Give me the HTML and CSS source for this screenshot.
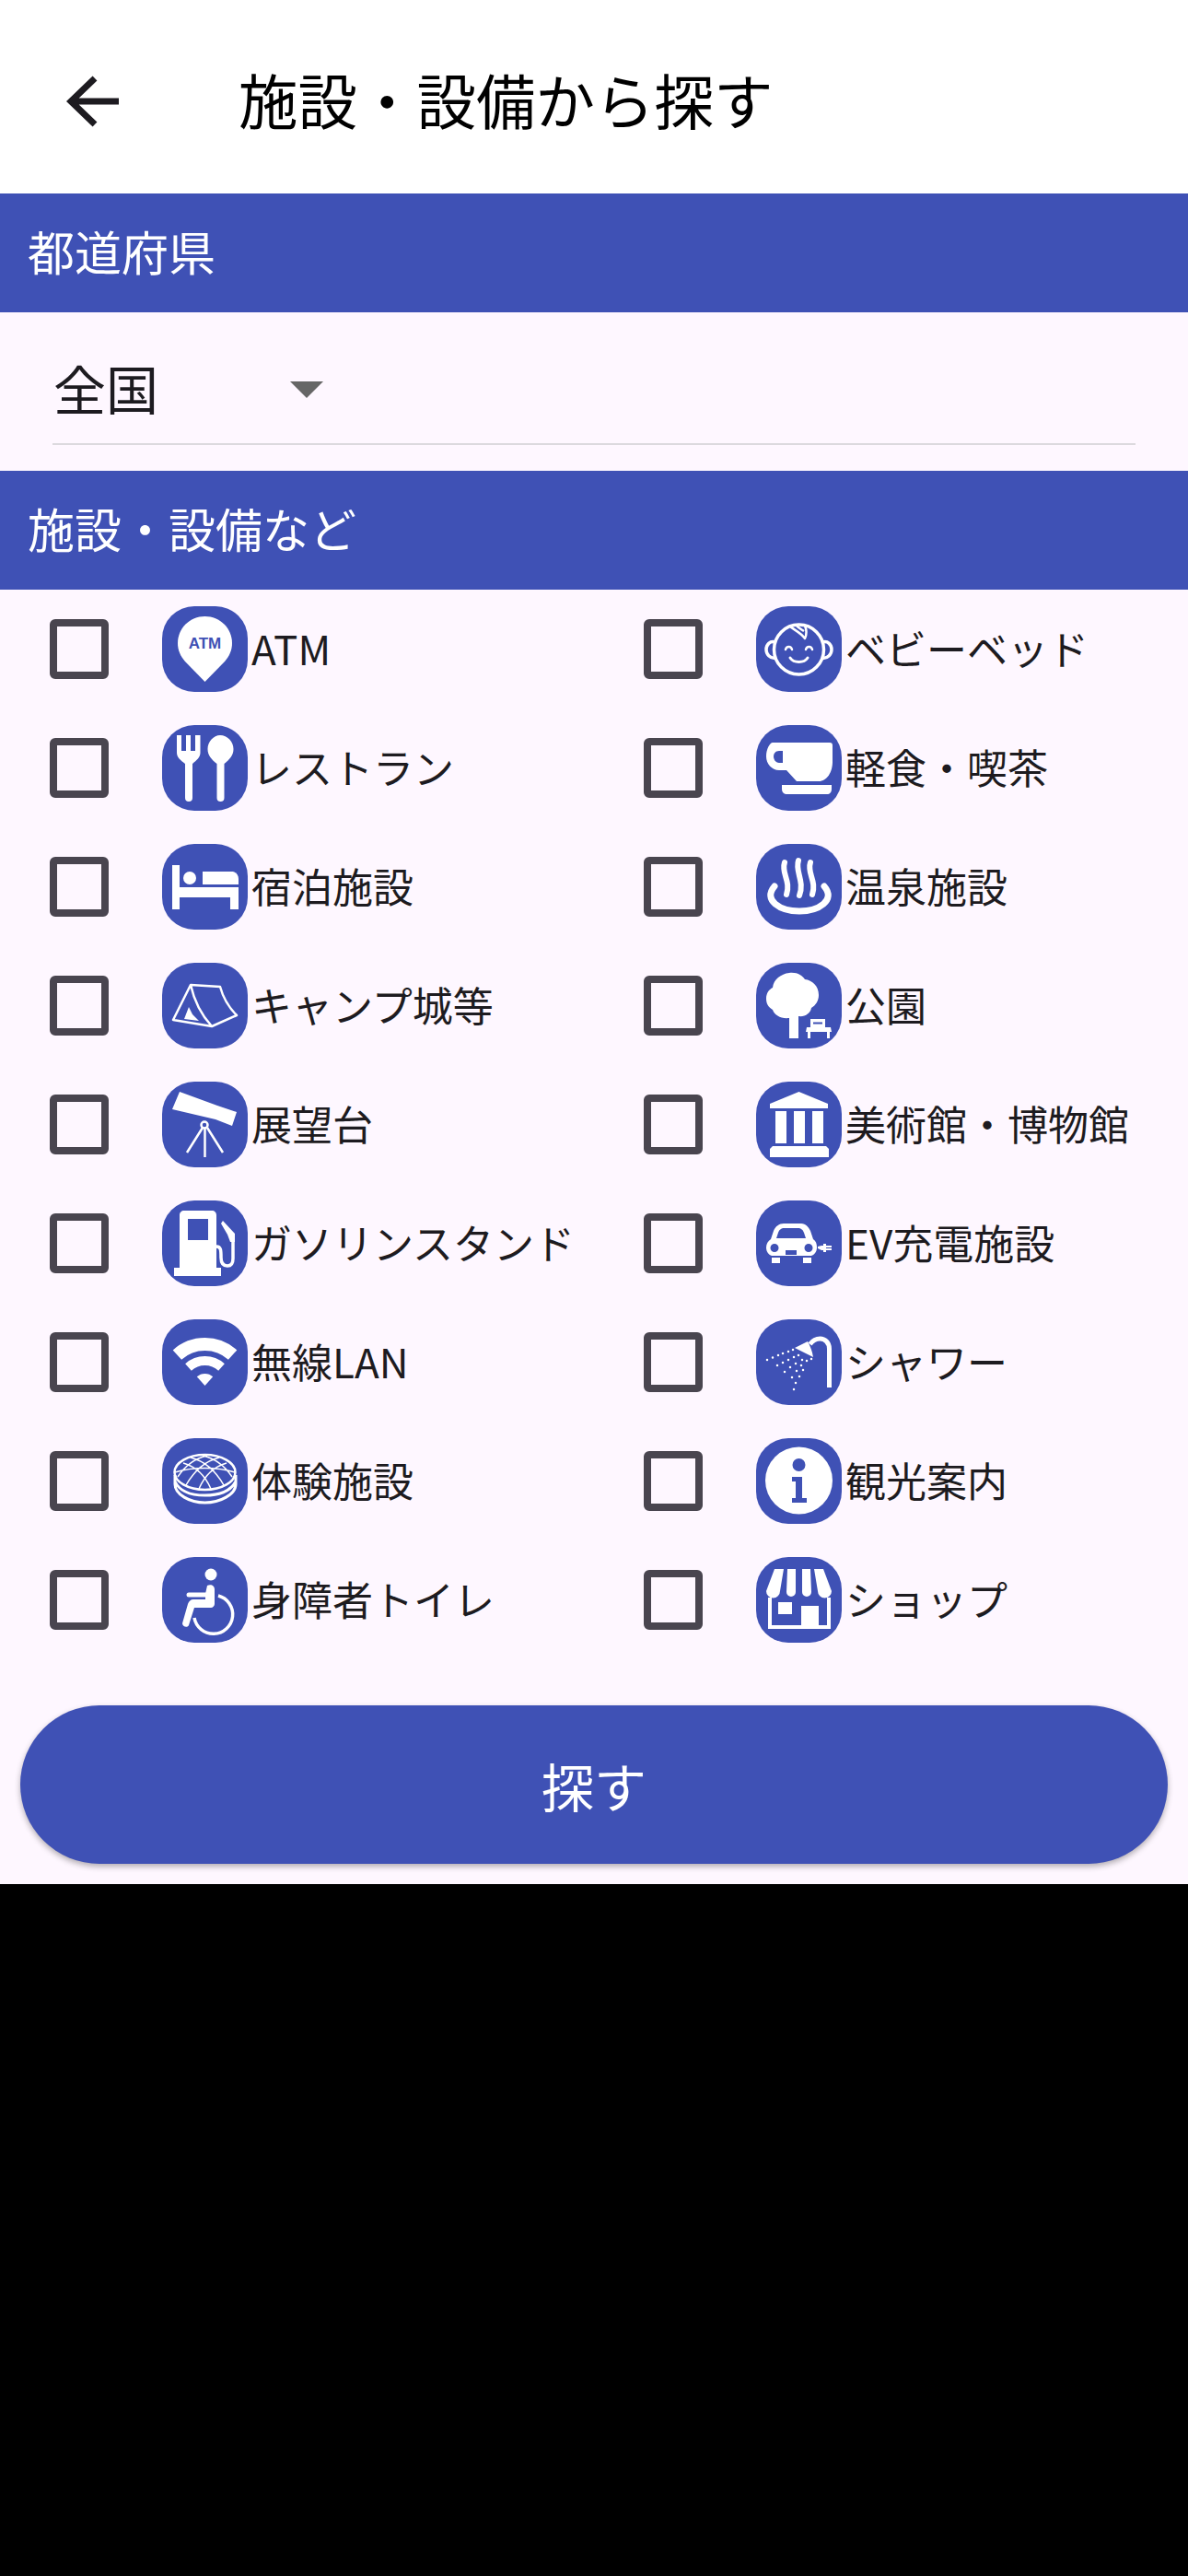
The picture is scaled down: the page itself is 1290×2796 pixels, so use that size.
FILE: index.html
```html
<!DOCTYPE html>
<html lang="ja">
<head>
  <meta charset="UTF-8" />
  <meta name="viewport" content="width=device-width, initial-scale=1.0"/>
  <title>施設・設備から探す</title>
  <link rel="stylesheet" href="styles.css">
</head>
<body>
  <div class="screen">
    <header class="topbar">
      <svg class="back" viewBox="0 0 58 56"><path d="M57 28H7M31 3 5 28l26 25" fill="none" stroke="#1d1b20" stroke-width="7"/></svg>
      <h1>施設・設備から探す</h1>
    </header>

    <div class="section">都道府県</div>
    <div class="select-wrap">
      <div class="select"><span>全国</span><i class="caret"></i></div>
    </div>

    <div class="section">施設・設備など</div>
    <div class="facilities">

      <label class="item"><span class="check"></span>
        <svg class="ico" viewBox="0 0 93 93"><rect class="bg" width="93" height="93" rx="35"/>
          <path class="w" d="M46.500 11C30 11 17 24 17 40c0 8 3 14 8 20l21.500 22L68 60c5-6 8-12 8-20 0-16-13-29-29.500-29z"/>
          <text class="atm" x="46.500" y="46" text-anchor="middle">ATM</text></svg>
        <span class="name">ATM</span></label>
      <label class="item"><span class="check"></span>
        <svg class="ico" viewBox="0 0 93 93"><rect class="bg" width="93" height="93" rx="35"/>
          <circle class="s" cx="46.500" cy="47" r="27" stroke-width="3.500"/>
          <path class="s" stroke-width="3.500" d="M21 39c-6-2-10 3-10 8s4 10 10 9M72 39c6-2 10 3 10 8s-4 10-10 9"/>
          <path class="s" stroke-width="2.500" stroke-linecap="round" d="M32 47c1-4 6-4 7 0M54 47c1-4 6-4 7 0"/>
          <path class="s" stroke-width="3" stroke-linecap="round" d="M37 56c4 6 15 6 19 0"/>
          <path class="s" stroke-width="2.500" stroke-linejoin="round" d="M36 21c5 5 12 7 17 14 2-4 2-9 0-14M43 20c2 3 6 5 9 7"/></svg>
        <span class="name">ベビーベッド</span></label>

      <label class="item"><span class="check"></span>
        <svg class="ico" viewBox="0 0 93 93"><rect class="bg" width="93" height="93" rx="35"/>
          <path class="w" d="M16 11h5v17h5V11h5v17h5V11h5.500v19c0 5-4 8-8.500 12v37a4 4 0 0 1-8 0V42c-5-4-9-7-9-12z"/>
          <path class="w" d="M63 11c8 0 14.500 7 14.500 15 0 7-4 11-10 16v37a4 4 0 0 1-8 0V42c-6-5-10-9-10-16 0-8 6.500-15 13.500-15z"/></svg>
        <span class="name">レストラン</span></label>
      <label class="item"><span class="check"></span>
        <svg class="ico" viewBox="0 0 93 93"><rect class="bg" width="93" height="93" rx="35"/>
          <path class="w" d="M18 19h62c2 0 3 1 3 3v18c0 11-6 21-15 21H44l-11-12H25c-8 0-14-7-14-15s4-15 7-15zm7 9c-4 0-6 3-6 6s2 7 6 7h4V28z" fill-rule="evenodd"/>
          <path class="w" d="M28 65h54v4c0 4-2 6-5 6H34c-4 0-6-2-6-6z"/></svg>
        <span class="name">軽食・喫茶</span></label>

      <label class="item"><span class="check"></span>
        <svg class="ico" viewBox="0 0 93 93"><rect class="bg" width="93" height="93" rx="35"/>
          <path class="w" d="M11 23h8v24h64v24h-9V58H19v13h-8z"/>
          <circle class="w" cx="30" cy="37" r="7"/>
          <path class="w" d="M44 30h31c5 0 8 3 8 8v6H44z"/></svg>
        <span class="name">宿泊施設</span></label>
      <label class="item"><span class="check"></span>
        <svg class="ico" viewBox="0 0 93 93"><rect class="bg" width="93" height="93" rx="35"/>
          <path class="s" stroke-width="7" stroke-linecap="round" d="M20 46c-13 15 6 27 27 27s40-12 27-27"/>
          <path class="s" stroke-width="6" stroke-linecap="round" d="M31 20c-4 12 7 20 2 35M46 18c-4 12 7 22 1 38M59 20c-4 12 7 20 2 35"/></svg>
        <span class="name">温泉施設</span></label>

      <label class="item"><span class="check"></span>
        <svg class="ico" viewBox="0 0 93 93"><rect class="bg" width="93" height="93" rx="35"/>
          <path class="s" stroke-width="2.500" stroke-linejoin="round" d="M31 24 12 62l42 7 27-12c-8-8-15-20-18-31zM31 24c4 18 12 33 23 45"/>
          <path class="w" d="M29 48l4 8 7 7-16-2z"/></svg>
        <span class="name">キャンプ城等</span></label>
      <label class="item"><span class="check"></span>
        <svg class="ico" viewBox="0 0 93 93"><rect class="bg" width="93" height="93" rx="35"/>
          <path class="w" d="M36 11c9-1 14 3 17 7 8 1 15 7 15 17 0 6-3 11-8 14-1 6-7 10-14 9v24H36V60c-9 1-16-3-18-9-5-3-7-7-7-12 0-6 3-10 7-12 1-9 9-15 18-16z"/>
          <path class="w" d="M59 61h16v9h6l1 5h-2v7h-3v-7H59v7h-3v-7h-2l1-5h4z"/>
          <path class="bline" d="M53 60h24M62 65.500h10"/></svg>
        <span class="name">公園</span></label>

      <label class="item"><span class="check"></span>
        <svg class="ico" viewBox="0 0 93 93"><rect class="bg" width="93" height="93" rx="35"/>
          <path class="w" d="M19 11 60 26l21 7-5 15-18-7-47-11z"/>
          <circle class="s" cx="46" cy="47" r="3.500" stroke-width="2.500"/>
          <path class="s" stroke-width="2.500" d="M44 50 27 77M46.500 50v32M49 50l17 27"/></svg>
        <span class="name">展望台</span></label>
      <label class="item"><span class="check"></span>
        <svg class="ico" viewBox="0 0 93 93"><rect class="bg" width="93" height="93" rx="35"/>
          <path class="w" d="M46.500 11 78 24v5H15v-5z"/>
          <path class="w" d="M21 32h12v35H21zM41 32h12v35H41zM61 32h12v35H61z"/>
          <path class="w" d="M18 70h58l3 3v9H15v-9z"/></svg>
        <span class="name">美術館・博物館</span></label>

      <label class="item"><span class="check"></span>
        <svg class="ico" viewBox="0 0 93 93"><rect class="bg" width="93" height="93" rx="35"/>
          <path class="w" fill-rule="evenodd" d="M24 11h30c3 0 5 2 5 5v57h5v9H13v-9h6V16c0-3 2-5 5-5zm4 9v23h22V20z"/>
          <path class="s" stroke-width="3.500" d="M59 50c5 0 5 4 5 12 0 5 2 9 7 9s6-4 6-8V42"/>
          <path class="w" d="M66 22l13 14v9h-5l-3-8-7-12z"/></svg>
        <span class="name">ガソリンスタンド</span></label>
      <label class="item"><span class="check"></span>
        <svg class="ico" viewBox="0 0 93 93"><rect class="bg" width="93" height="93" rx="35"/>
          <path class="w" fill-rule="evenodd" d="M30 25h19c5 0 8 4 10 8l3 9c3 2 4 5 4 9 0 5-3 8-6 9H17c-3-1-6-4-6-9 0-4 2-7 5-9l3-9c2-5 6-8 11-8zm1 5c-4 0-6 2-7 5l-2 6h32l-2-6c-1-3-3-5-7-5zM20 47a4.500 4.500 0 0 0 0 9 4.500 4.500 0 0 0 0-9zm37 0a4.500 4.500 0 0 0 0 9 4.500 4.500 0 0 0 0-9zM32 54v5h12v-5z"/>
          <path class="w" d="M17 62h9v6h-9zM51 62h9v6h-9z"/>
          <path class="w" d="M67 50l4-1h2v-2h3v2h6v2h-6v1h6v2h-6v2h-3v-2h-2l-4-2z"/></svg>
        <span class="name">EV充電施設</span></label>

      <label class="item"><span class="check"></span>
        <svg class="ico" viewBox="0 0 93 93"><rect class="bg" width="93" height="93" rx="35"/>
          <path class="s" stroke-width="14" d="M16.400 38.600a45 45 0 0 1 60.200 0"/>
          <path class="s" stroke-width="10" d="M28.500 52a27 27 0 0 1 36 0"/>
          <path class="w" d="M37.800 62.300a13 13 0 0 1 17.400 0L46.500 72z"/></svg>
        <span class="name">無線LAN</span></label>
      <label class="item"><span class="check"></span>
        <svg class="ico" viewBox="0 0 93 93"><rect class="bg" width="93" height="93" rx="35"/>
          <path class="s" stroke-width="5" d="M79.500 74V32c0-7-5-11-10-11-5 0-8 2-11 6"/>
          <path class="w" d="M42 31l14-7c3 5 5 11 6 17z"/>
          <path class="dots" d="M12 44h.01M18 41.500h.01M24 39h.01M29 37h.01M35 35h.01M40 33h.01M23 50h.01M29 47h.01M35 44h.01M41 41h.01M46 39h.01M31 57h.01M37 52h.01M43 48h.01M50 44h.01M39 63h.01M44 56h.01M49 50h.01M55 45h.01M43 69h.01M47 62h.01M51 55h.01M41 76h.01M60 43h.01"/></svg>
        <span class="name">シャワー</span></label>

      <label class="item"><span class="check"></span>
        <svg class="ico" viewBox="0 0 93 93"><rect class="bg" width="93" height="93" rx="35"/>
          <ellipse class="s" cx="46.500" cy="37" rx="33" ry="19" stroke-width="2.500"/>
          <path class="s" stroke-width="1.500" d="M17 42c8-12 18-20 32-23M26 51c8-14 20-26 36-30M40 55c6-14 16-24 30-28M76 42c-8-12-18-20-32-23M67 51c-8-14-20-26-36-30M53 55c-6-14-16-24-30-28M14 37c20-6 45-6 65 0"/>
          <path class="s" stroke-width="3" d="M14 40v10c0 11 16 20 32.500 20S80 61 80 50V40M14 47c5 11 18 15 32.500 15S74 58 80 47"/></svg>
        <span class="name">体験施設</span></label>
      <label class="item"><span class="check"></span>
        <svg class="ico" viewBox="0 0 93 93"><rect class="bg" width="93" height="93" rx="35"/>
          <circle class="w" cx="46.500" cy="46" r="36.500"/>
          <circle class="b" cx="46.500" cy="29" r="7"/>
          <path class="b" d="M39 42h11v23h5v5H39v-5h4V47h-4z"/></svg>
        <span class="name">観光案内</span></label>

      <label class="item"><span class="check"></span>
        <svg class="ico" viewBox="0 0 93 93"><rect class="bg" width="93" height="93" rx="35"/>
          <circle class="w" cx="53" cy="19" r="6.500"/>
          <path class="s" stroke-width="5" stroke-linecap="round" d="M29 41h20"/>
          <path class="w" d="M49 31c4-2 8 0 8 4v16c0 2-2 4-4 4H35l-6 19c-1 3-7 2-7-2l6-21c1-3 3-5 6-5h13V40z"/>
          <path class="s" stroke-width="3.500" d="M61 42a21 21 0 1 1-26 24"/></svg>
        <span class="name">身障者トイレ</span></label>
      <label class="item"><span class="check"></span>
        <svg class="ico" viewBox="0 0 93 93"><rect class="bg" width="93" height="93" rx="35"/>
          <path class="w" d="M20 13h10l-4 24a6 6 0 0 1-15 0zM34 13h9v25a4.500 4.500 0 0 1-10 0zM50 13h9l1 25a4.500 4.500 0 0 1-10 0zM63 13h10l9 24a6 6 0 0 1-15 0z"/>
          <path class="w" fill-rule="evenodd" d="M13 44h4v30h32V53h19v21h9V44h4v34H13zM24 49h15v13H24z"/></svg>
        <span class="name">ショップ</span></label>

    </div>

    <button class="search">探す</button>
  </div>
</body>
</html>
```

FILE: styles.css
```css
html, body {
  margin: 0;
  height: 100%;
  background: #000;
}
body {
  font-family: "Noto Sans CJK JP", "Noto Sans", sans-serif;
  color: #1d1b20;
}
.screen {
  padding-bottom: 22px;
  background: #fef7ff;
}
.topbar {
  display: flex;
  align-items: center;
  height: 210px;
  box-sizing: border-box;
  padding: 10px 0 0 72px;
  background: #fff;
}
.back {
  width: 58px;
  height: 56px;
  margin-right: 129px;
}
h1 {
  margin: 0 0 6px;
  font-size: 64.5px;
  font-weight: 400;
  color: #000;
}
.section {
  display: flex;
  align-items: center;
  box-sizing: border-box;
  height: 129px;
  padding: 0 0 6px 30px;
  background: #3f51b5;
  color: #fff;
  font-size: 51px;
}
.select-wrap {
  padding: 0 57px 28px;
}
.select {
  display: flex;
  align-items: center;
  box-sizing: border-box;
  height: 144px;
  padding: 20px 0 0 1px;
  border-bottom: 2px solid #dcd9de;
  font-size: 57px;
}
.caret {
  width: 0;
  height: 0;
  margin: 6px 0 0 143px;
  border-top: 18px solid #666;
  border-left: 18px solid transparent;
  border-right: 18px solid transparent;
}
.facilities {
  display: grid;
  grid-template-columns: 645px 645px;
  grid-auto-rows: 93px;
  row-gap: 36px;
  padding-top: 18px;
}
.item {
  display: flex;
  align-items: center;
  padding-left: 54px;
}
.check {
  box-sizing: border-box;
  width: 64px;
  height: 65px;
  margin-right: 58px;
  border: 8px solid #49454f;
  border-radius: 6px;
}
.ico {
  flex: none;
  width: 93px;
  height: 93px;
  margin-right: 4px;
}
.name {
  padding-bottom: 3px;
  font-size: 44px;
  white-space: nowrap;
}
.bg, .b {
  fill: #3f51b5;
}
.w {
  fill: #fff;
}
.s {
  fill: none;
  stroke: #fff;
}
.bline {
  fill: none;
  stroke: #3f51b5;
  stroke-width: 2;
}
.dots {
  fill: none;
  stroke: #fff;
  stroke-width: 2.500;
  stroke-linecap: round;
}
.atm {
  fill: #3f51b5;
  font-family: "Liberation Sans", sans-serif;
  font-size: 17px;
  font-weight: 700;
}
.search {
  display: block;
  width: 1246px;
  height: 172px;
  margin: 68px 22px 0;
  border: none;
  border-radius: 86px;
  background: #3f51b5;
  box-shadow: 0 3px 6px rgba(0,0,0,0.3);
  color: #fff;
  font-family: inherit;
  font-size: 57px;
}
```
